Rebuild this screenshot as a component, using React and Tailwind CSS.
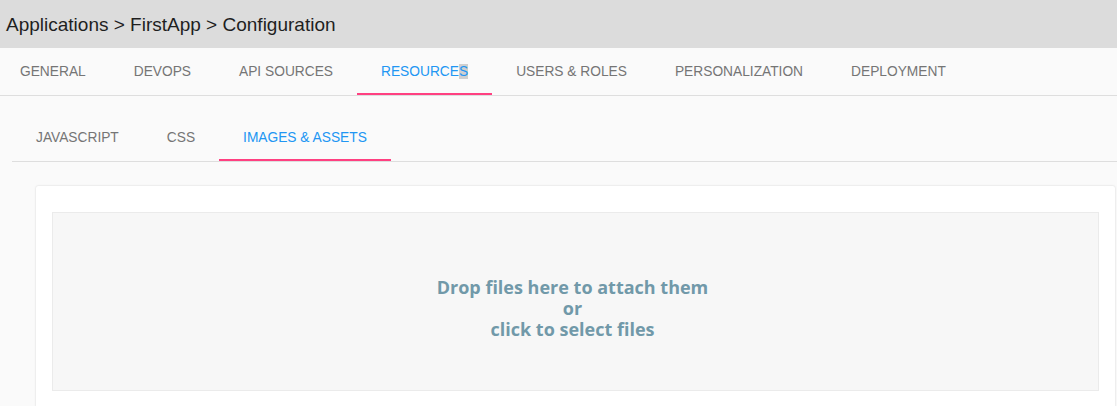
import React from "react";

const mainTabs = ["GENERAL", "DEVOPS", "API SOURCES", "RESOURCES", "USERS & ROLES", "PERSONALIZATION", "DEPLOYMENT"];
const subTabs = ["JAVASCRIPT", "CSS", "IMAGES & ASSETS"];

export default function App() {
  return (
    <div className="w-[1117px] h-[406px] overflow-hidden bg-[#fafafa] font-['Liberation_Sans',Arial,sans-serif]">
      <div className="h-12 bg-[#dcdcdc] flex items-center pl-[6px] pt-[2px]">
        <span className="text-[19px] text-[#1f1f1f]">Applications &gt; FirstApp &gt; Configuration</span>
      </div>
      <div className="h-12 flex border-b border-[#dedede] bg-[#fafafa]">
        <div className="flex -ml-1">
          {mainTabs.map((t) => {
            const active = t === "RESOURCES";
            return (
              <div
                key={t}
                className={`relative px-6 pt-[2px] flex items-center text-[13.75px] ${active ? "text-[#2196f3]" : "text-[#757575]"}`}
              >
                {active ? (
                  <span>
                    RESOURCE<span className="bg-[#cfcfcf]">S</span>
                  </span>
                ) : (
                  <span>{t}</span>
                )}
                {active && <div className="absolute left-0 right-0 bottom-0 h-[2px] bg-[#ff4081]" />}
              </div>
            );
          })}
        </div>
      </div>
      <div className="pl-3 pt-[18px]">
        <div className="h-12 flex border-b border-[#dedede]">
          {subTabs.map((t) => {
            const active = t === "IMAGES & ASSETS";
            return (
              <div
                key={t}
                className={`relative px-6 pt-[1px] flex items-center text-[13.75px] ${active ? "text-[#2196f3]" : "text-[#757575]"}`}
              >
                <span>{t}</span>
                {active && <div className="absolute left-0 right-0 bottom-0 h-[2px] bg-[#ff4081]" />}
              </div>
            );
          })}
        </div>
        <div className="ml-6 mr-[2px] mt-6 bg-white rounded-t-[2px] shadow-[0_0_2px_rgba(0,0,0,0.18)] px-4 pt-[26px] pb-4">
          <div className="h-[179px] bg-[#f7f7f7] border border-[#ebebeb] flex items-center justify-center pt-[14px] pr-[6px]">
            <div className="text-center font-['Open_Sans',sans-serif] font-bold text-[18px] leading-[21px] text-[#7199a9]">
              <div>Drop files here to attach them</div>
              <div>or</div>
              <div>click to select files</div>
            </div>
          </div>
        </div>
      </div>
    </div>
  );
}
